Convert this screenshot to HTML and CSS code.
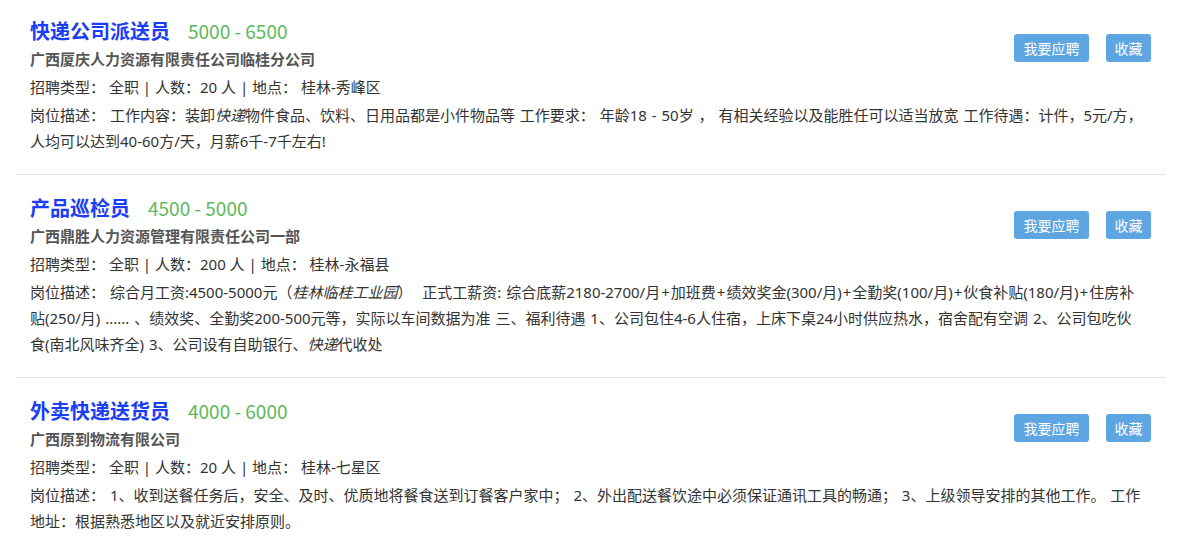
FILE: index.html
```html
<!DOCTYPE html>
<html lang="zh-CN">
<head>
<meta charset="utf-8">
<title>职位列表</title>
<link rel="stylesheet" href="styles.css">
</head>
<body>
<div class="job-list">
  <div class="job">
    <div class="actions">
      <a class="btn btn-apply">我要应聘</a>
      <a class="btn btn-fav">收藏</a>
    </div>
    <div class="title-row"><span class="job-title">快递公司派送员</span><span class="salary">5000 - 6500</span></div>
    <div class="company">广西厦庆人力资源有限责任公司临桂分公司</div>
    <div class="meta">招聘类型： 全职 | 人数：20 人 | 地点： 桂林-秀峰区</div>
    <div class="desc">岗位描述： 工作内容：装卸<em>快递</em>物件食品、饮料、日用品都是小件物品等 工作要求： 年龄18 - 50岁 ， 有相关经验以及能胜任可以适当放宽 工作待遇：计件，5元/方，人均可以达到40-60方/天，月薪6千-7千左右!</div>
  </div>
  <div class="job">
    <div class="actions">
      <a class="btn btn-apply">我要应聘</a>
      <a class="btn btn-fav">收藏</a>
    </div>
    <div class="title-row"><span class="job-title">产品巡检员</span><span class="salary">4500 - 5000</span></div>
    <div class="company">广西鼎胜人力资源管理有限责任公司一部</div>
    <div class="meta">招聘类型： 全职 | 人数：200 人 | 地点： 桂林-永福县</div>
    <div class="desc">岗位描述： 综合月工资:4500-5000元（<em>桂林临桂工业园</em>）&nbsp;&nbsp;正式工薪资: 综合底薪2180-2700/月<span class="op">+</span>加班费<span class="op">+</span>绩效奖金(300/月)<span class="op">+</span>全勤奖(100/月)<span class="op">+</span>伙食补贴(180/月)<span class="op">+</span>住房补贴(250/月) ...... 、绩效奖、全勤奖200-500元等，实际以车间数据为准 三、福利待遇 1、公司包住4-6人住宿，上床下桌24小时供应热水，宿舍配有空调 2、公司包吃伙食(南北风味齐全) 3、公司设有自助银行、<em>快递</em>代收处</div>
  </div>
  <div class="job">
    <div class="actions">
      <a class="btn btn-apply">我要应聘</a>
      <a class="btn btn-fav">收藏</a>
    </div>
    <div class="title-row"><span class="job-title">外卖快递送货员</span><span class="salary">4000 - 6000</span></div>
    <div class="company">广西原到物流有限公司</div>
    <div class="meta">招聘类型： 全职 | 人数：20 人 | 地点： 桂林-七星区</div>
    <div class="desc">岗位描述： 1、收到送餐任务后，安全、及时、优质地将餐食送到订餐客户家中； 2、外出配送餐饮途中必须保证通讯工具的畅通； 3、上级领导安排的其他工作。 工作地址：根据熟悉地区以及就近安排原则。</div>
  </div>
</div>
</body>
</html>
```
FILE: styles.css
```css
html, body {
  margin: 0;
  padding: 0;
  background: #fff;
}
body {
  font-family: "Noto Sans CJK SC", "Noto Sans", "Liberation Sans", sans-serif;
  font-size: 15px;
  color: #333;
}
.job-list {
  margin: 0 17px;
}
.job {
  padding: 18px 13px 20px 13px;
  border-bottom: 1px dotted #c8c8c8;
}
.job:first-child {
  padding-top: 16px;
}
.actions {
  float: right;
  margin-top: 18px;
  display: flex;
  gap: 17px;
}
.btn {
  display: block;
  height: 28px;
  line-height: 28px;
  text-align: center;
  background: #5ea6e2;
  color: #fff;
  border-radius: 3px;
  font-size: 14px;
  cursor: pointer;
}
.btn-apply {
  width: 75px;
}
.btn-fav {
  width: 45px;
}
.title-row {
  line-height: 30px;
  height: 30px;
}
.job-title {
  font-size: 20px;
  font-weight: bold;
  color: #1a3ef5;
}
.salary {
  font-size: 19px;
  color: #5cb85c;
  margin-left: 18px;
}
.company {
  font-weight: bold;
  color: #555;
  line-height: 26px;
}
.meta {
  font-family: "Noto Sans", "Noto Sans CJK SC", sans-serif;
  line-height: 30px;
}
.desc {
  font-family: "Noto Sans", "Noto Sans CJK SC", sans-serif;
  line-height: 26px;
  word-spacing: 1px;
  clear: both;
  margin-right: 8px;
}
.desc em {
  font-style: italic;
}
.op {
  margin: 0 1px;
}
```
